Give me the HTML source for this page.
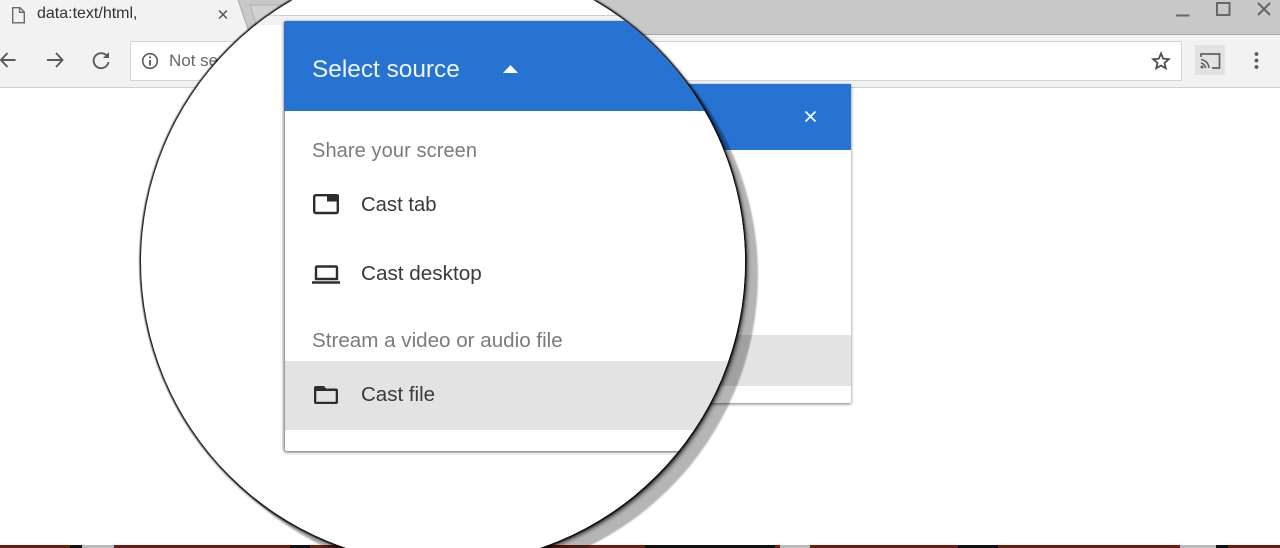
<!DOCTYPE html>
<html style="width:1280px;height:548px;overflow:hidden"><head><meta charset="utf-8">
<style>
html,body{margin:0;padding:0;background:#fff}
body{width:1280px;height:548px;overflow:hidden;position:relative;font-family:"Liberation Sans",sans-serif}
#w{position:absolute;left:0;top:0;width:1280px;height:548px;overflow:hidden}
.a{position:absolute}
.t{position:absolute;white-space:nowrap;line-height:1}
svg{position:absolute;left:0;top:0;display:block}
.f{position:absolute;left:0;top:0;width:1280px;height:548px}
.in{position:absolute;left:0;top:0;width:1280px;height:548px;overflow:hidden;background:#fff;clip-path:circle(302px at 443px 262px)}
</style></head>
<body>
<div id="w">
<!-- browser chrome -->
<div class="a" style="left:0;top:0;width:1280px;height:35px;background:#c8c8c8"></div>
<div class="a" style="left:0;top:34px;width:1280px;height:1px;background:#a9a9a9"></div>
<div class="a" style="left:0;top:35px;width:1280px;height:52px;background:#f2f2f2"></div>
<div class="a" style="left:0;top:87px;width:1280px;height:1px;background:#cfcfcf"></div>
<svg width="1280" height="100" viewBox="0 0 1280 100" fill="none">
<path d="M0 0H238L250 35H0Z" fill="#f2f2f2"/>
<path d="M238 0L250 35" stroke="#a8a8a8"/>
<path d="M250 5H300L310 30H258Z" fill="#d2d2d2" stroke="#b0b0b0"/>
<path d="M12.700 7.700H20L24.300 12V22.800H12.700Z" stroke="#6a6a6a" stroke-width="1.400"/>
<path d="M19.500 7.700V12.300H24.300" stroke="#6a6a6a" stroke-width="1.300"/>
<path d="M219 10.500L227 18.500M227 10.500L219 18.500" stroke="#555" stroke-width="1.500"/>
<path d="M1 60H15.500M7.500 53L1 60L7.500 67" stroke="#5a5a5a" stroke-width="1.900"/>
<path d="M47 60H62M56 53L62.500 60L56 67" stroke="#5a5a5a" stroke-width="1.900"/>
<path d="M107 56A7.500 7.500 0 1 0 108.500 62" stroke="#5a5a5a" stroke-width="1.900"/>
<path d="M109 52V58H103Z" fill="#5a5a5a"/>
<path d="M1176 15.500H1189.500" stroke="#666" stroke-width="2"/>
<path d="M1217 3H1229.500V15H1217Z" stroke="#666" stroke-width="2"/>
<path d="M1258 3L1270 15M1270 3L1258 15" stroke="#666" stroke-width="2"/>
</svg>
<div class="a" style="left:130px;top:41px;width:1050px;height:38px;background:#fff;border:1px solid #d4d4d4;border-radius:2px"></div>
<div class="a" style="left:1195px;top:45px;width:30px;height:30px;background:#e2e2e2;border-radius:2px"></div>
<svg width="1280" height="100" viewBox="0 0 1280 100" fill="none">
<circle cx="150" cy="61" r="7.300" stroke="#5a5a5a" stroke-width="1.600"/>
<path d="M150 60V65.500M150 56.500V58.200" stroke="#5a5a5a" stroke-width="1.900"/>
<path d="M1161 53.500L1163.200 58.700L1168.800 59.200L1164.500 62.900L1165.800 68.300L1161 65.500L1156.200 68.300L1157.500 62.900L1153.200 59.200L1158.800 58.700Z" stroke="#4e4e4e" stroke-width="1.800"/>
<path d="M1201 57V54H1219.500V68H1212" stroke="#5f5f5f" stroke-width="1.700"/>
<path d="M1201 59.500A9 9 0 0 1 1209 68M1201 63A5.500 5.500 0 0 1 1205.500 68" stroke="#5f5f5f" stroke-width="1.600"/>
<circle cx="1202" cy="67" r="1.500" fill="#5f5f5f"/>
<circle cx="1256.500" cy="54" r="1.900" fill="#5a5a5a"/><circle cx="1256.500" cy="60.500" r="1.900" fill="#5a5a5a"/><circle cx="1256.500" cy="67" r="1.900" fill="#5a5a5a"/>
</svg>
<div class="t" style="left:37px;top:6px;font-size:16px;color:#333">data:text/html,</div>
<div class="t" style="left:169px;top:52px;font-size:17px;color:#666">Not secure</div>

<!-- background dialog -->
<div class="a" style="left:500px;top:84px;width:351px;height:319px;background:#fff;box-shadow:0 1px 3px rgba(0,0,0,.55);border-radius:1px"></div>
<div class="a" style="left:500px;top:84px;width:351px;height:66px;background:#2673d2"></div>
<div class="a" style="left:500px;top:335px;width:351px;height:51px;background:#e3e3e3"></div>
<svg width="1280" height="160" viewBox="0 0 1280 160" fill="none"><path d="M805.500 111.500L815.500 121.500M815.500 111.500L805.500 121.500" stroke="#fff" stroke-width="1.600"/></svg>

<!-- bottom strip -->
<div class="a" style="left:0;top:545px;width:1280px;height:3px;background:#6b1d14"></div>
<div class="a" style="left:70px;top:545px;width:12px;height:3px;background:#111"></div>
<div class="a" style="left:82px;top:545px;width:32px;height:3px;background:#bbb"></div>
<div class="a" style="left:290px;top:545px;width:20px;height:3px;background:#111"></div>
<div class="a" style="left:645px;top:545px;width:130px;height:3px;background:#111"></div>
<div class="a" style="left:780px;top:545px;width:30px;height:3px;background:#bbb"></div>
<div class="a" style="left:958px;top:545px;width:40px;height:3px;background:#111"></div>
<div class="a" style="left:1180px;top:545px;width:36px;height:3px;background:#bbb"></div>
<div class="a" style="left:1216px;top:545px;width:12px;height:3px;background:#111"></div>

<!-- magnifier shadow -->
<div class="f" style="filter:blur(.8px)"><div class="f" style="background:rgba(0,0,0,.29);clip-path:circle(302px at 456px 275px)"></div></div>
<div class="f" style="filter:blur(2px)"><div class="f" style="background:rgba(0,0,0,.7);clip-path:circle(302px at 445.500px 264.500px)"></div></div>
<div class="f" style="filter:blur(.7px)"><div class="f" style="background:rgba(0,0,0,.95);clip-path:circle(303.500px at 443px 262px)"></div></div>

<!-- magnifier -->
<div class="in">
  <div class="a" style="left:0;top:15px;width:1280px;height:1px;background:#cfcfcf"></div>
  <div class="a" style="left:0;top:16px;width:1280px;height:9px;background:#f2f2f2"></div>
  <div class="a" style="left:285px;top:21px;width:600px;height:430px;background:#fff;box-shadow:-1px 1px 3px rgba(0,0,0,.65);border-radius:2px 0 0 2px"></div>
  <div class="a" style="left:284px;top:21px;width:600px;height:90px;background:#2673d2;border-radius:2px 0 0 0"></div>
  <div class="a" style="left:285px;top:361px;width:600px;height:69px;background:#e3e3e3"></div>
  <div class="t" style="left:312px;top:58px;font-size:24.400px;color:#f0f6fd">Select source</div>
  <div class="t" style="left:312px;top:141px;font-size:20px;color:#7b7b7b;letter-spacing:.1px">Share your screen</div>
  <div class="t" style="left:361px;top:195px;font-size:20.300px;color:#3a3a3a">Cast tab</div>
  <div class="t" style="left:361px;top:264px;font-size:20.700px;color:#3a3a3a">Cast desktop</div>
  <div class="t" style="left:312px;top:331px;font-size:20.600px;color:#7b7b7b">Stream a video or audio file</div>
  <div class="t" style="left:361px;top:385px;font-size:20.500px;color:#3a3a3a">Cast file</div>
  <svg width="1280" height="548" viewBox="0 0 1280 548" fill="none">
    <path d="M503 73L510.500 65L518 73Z" fill="#fff"/>
    <rect x="314.200" y="195.200" width="23.600" height="17.800" rx="1.500" stroke="#2d2d2d" stroke-width="2.400"/>
    <rect x="327" y="194.500" width="12" height="7" fill="#2d2d2d"/>
    <path d="M316 267.500A1 1 0 0 1 317 266.500H336A1 1 0 0 1 337 267.500V279H316Z" stroke="#2d2d2d" stroke-width="2.400"/>
    <path d="M312 282.500H340" stroke="#2d2d2d" stroke-width="2.400"/>
    <path fill-rule="evenodd" d="M316 386H324L326 388.500H336Q338 388.500 338 390.500V402Q338 404 336 404H316Q314 404 314 402V388Q314 386 316 386ZM316.300 391V401.700H335.700V391Z" fill="#2d2d2d"/>
  </svg>
</div>
</div>
</body></html>
